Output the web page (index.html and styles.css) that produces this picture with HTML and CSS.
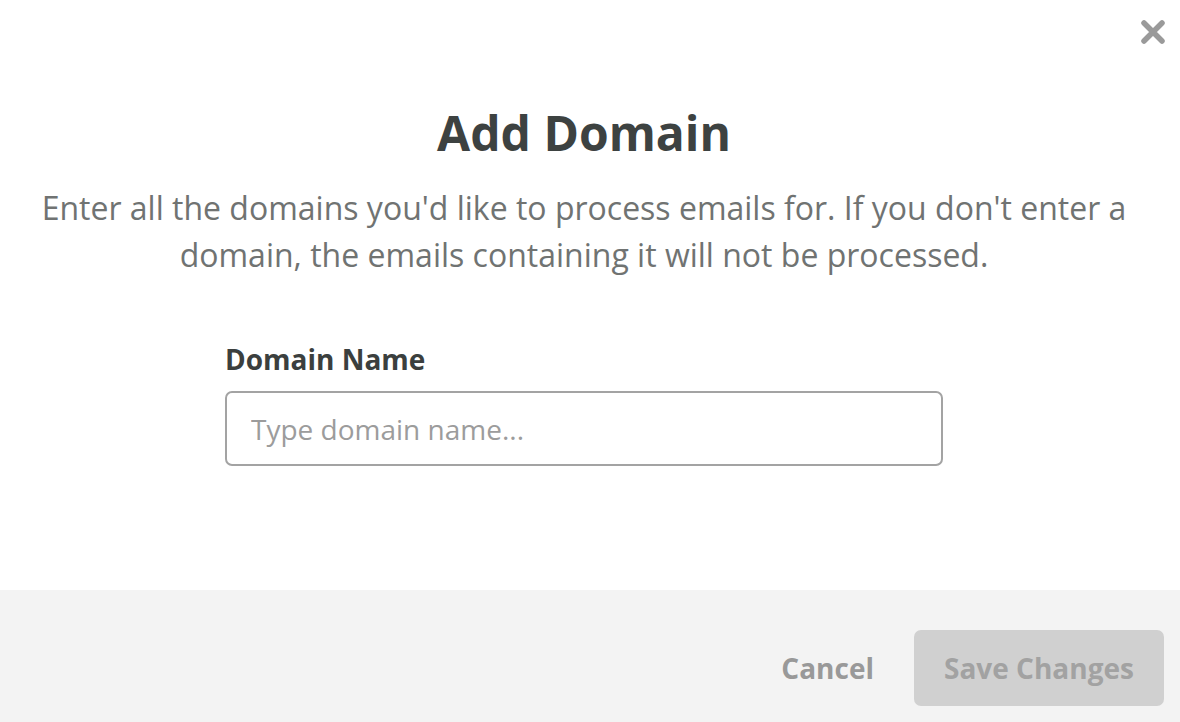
FILE: index.html
```html
<!DOCTYPE html>
<html lang="en">
<head>
  <meta charset="UTF-8" />
  <meta name="viewport" content="width=device-width, initial-scale=1.0" />
  <title>Add Domain</title>
  <link rel="stylesheet" href="styles.css">
</head>
<body>
  <div class="modal">
    <button class="close" aria-label="Close">
      <svg width="26" height="26" viewBox="0 0 26 26">
        <path d="M4 4 L22 22 M22 4 L4 22" stroke="#9a9a9a" stroke-width="5.5" stroke-linecap="round" />
      </svg>
    </button>

    <div class="modal-body">
      <h1>Add Domain</h1>
      <p class="intro">Enter all the domains you'd like to process emails for. If you don't enter a domain, the emails containing it will not be processed.</p>

      <div class="field">
        <label for="domain">Domain Name</label>
        <input type="text" id="domain" class="form-control" placeholder="Type domain name..." />
      </div>
    </div>

    <div class="modal-footer">
      <button class="btn-cancel">Cancel</button>
      <button class="btn-save" disabled>Save Changes</button>
    </div>
  </div>
</body>
</html>
```
FILE: styles.css
```css
body {
  margin: 0;
  font-family: 'Open Sans', 'Noto Sans', sans-serif;
  background: #fff;
  color: #3d4241;
}
.modal {
  position: relative;
  height: 722px;
  display: flex;
  flex-direction: column;
}
.close {
  position: absolute;
  top: 19px;
  right: 14px;
  background: none;
  border: none;
  padding: 0;
  cursor: pointer;
}
.modal-body {
  flex: 1;
  padding: 104px 52px 0 40px;
  text-align: center;
}
h1 {
  margin: 0;
  font-size: 48px;
  line-height: 58px;
  font-weight: 700;
  color: #3d4241;
}
.intro {
  margin: 22px 0 0;
  font-size: 32px;
  line-height: 47px;
  color: #707372;
}
.field {
  width: 718px;
  margin: 62px auto 0;
  text-align: left;
}
label {
  display: block;
  font-size: 28px;
  font-weight: 700;
  line-height: 38px;
  color: #3b3f3e;
  margin-bottom: 13px;
}
.form-control {
  box-sizing: border-box;
  width: 100%;
  height: 75px;
  padding: 0 24px;
  border: 2px solid #a3a3a3;
  border-radius: 7px;
  font-family: inherit;
  font-size: 28px;
  color: #3d4241;
  outline: none;
}
.form-control::placeholder {
  color: #9c9c9c;
}
.modal-footer {
  box-sizing: border-box;
  height: 132px;
  background: #f3f3f3;
  display: flex;
  align-items: flex-start;
  justify-content: flex-end;
  gap: 40px;
  padding: 40px 16px 0;
}
.modal-footer button {
  font-family: inherit;
  font-weight: 700;
  font-size: 28px;
  border: none;
  cursor: pointer;
}
.btn-cancel {
  background: none;
  color: #999;
  padding: 0;
  height: 76px;
}
.btn-save {
  background: #d0d0d0;
  color: #a2a2a2;
  height: 76px;
  width: 250px;
  border-radius: 7px;
}
```
